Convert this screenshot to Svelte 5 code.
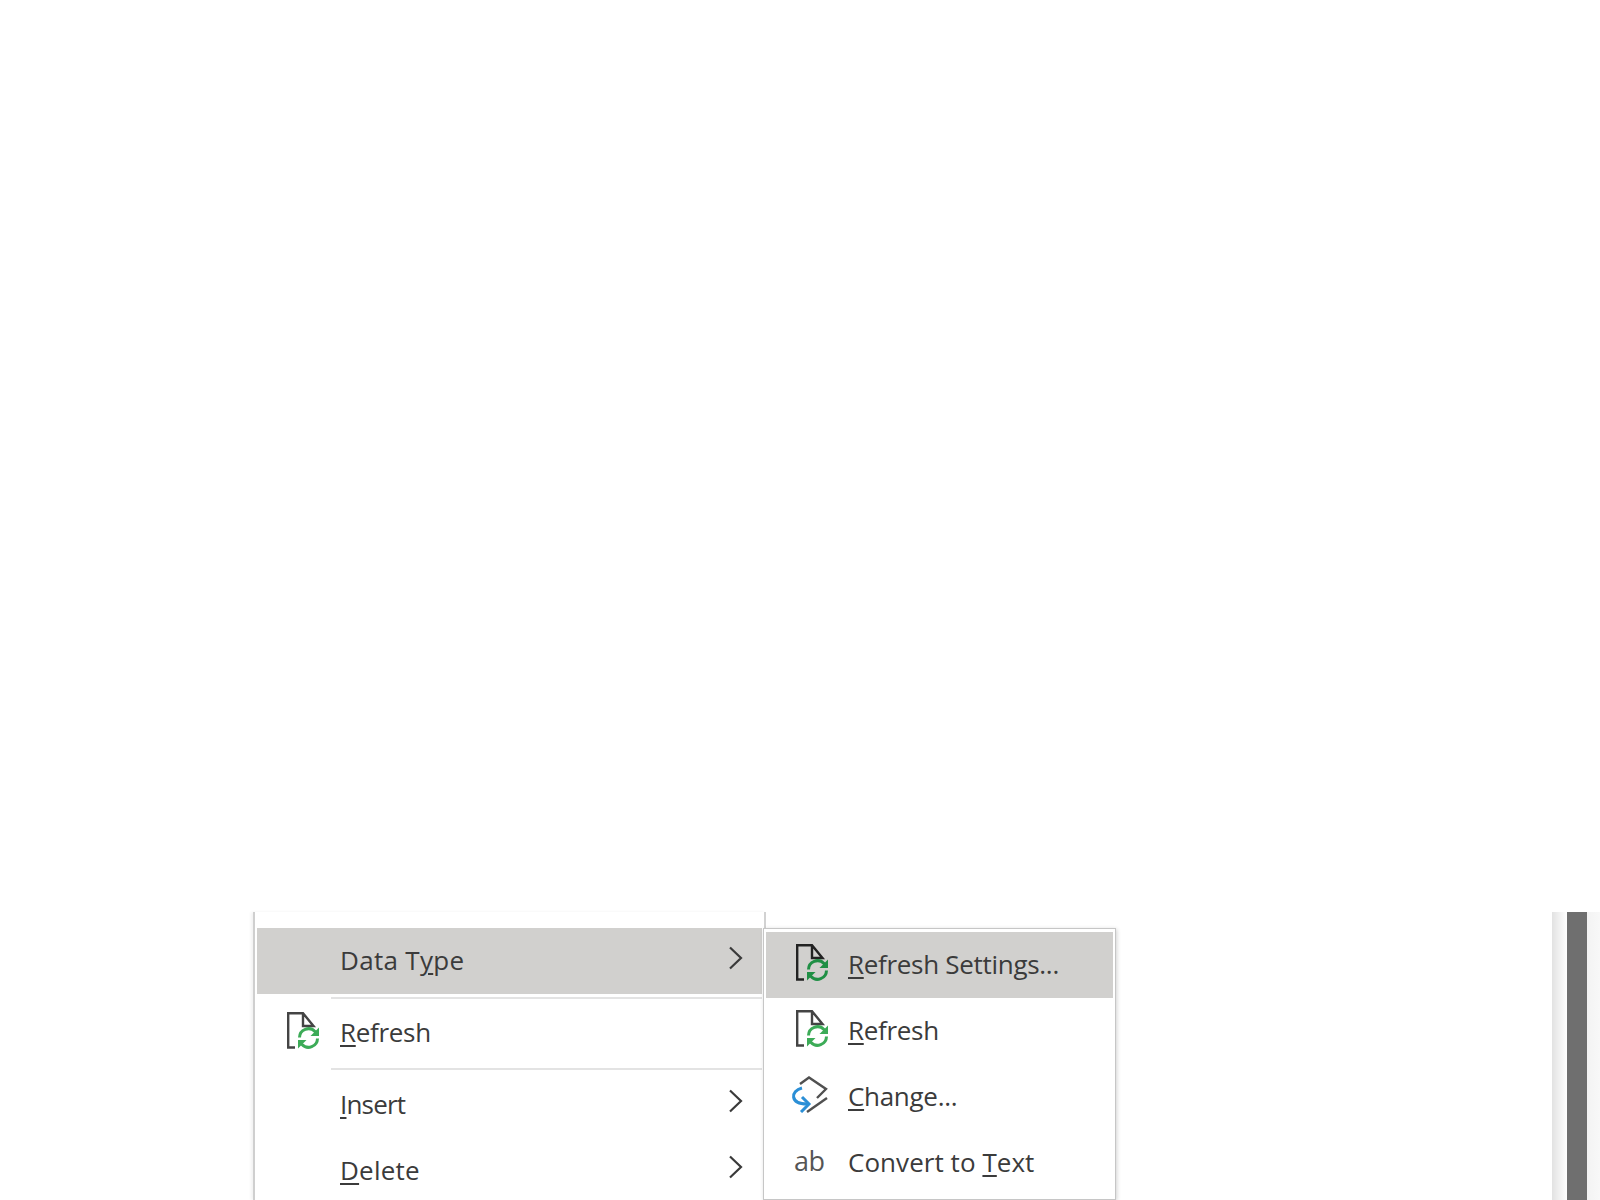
<script>
  const mainRows = [
    { key: 'insert', u: 'I', after: 'nsert' },
    { key: 'delete', u: 'D', after: 'elete' }
  ];
</script>

{#snippet docIcon(green, stroke)}
  <svg class="ico" width="38" height="40" viewBox="0 0 38 40" fill="none">
    <path d="M9 36.500H2.200V2.200H17L27.500 15H17V3" stroke={stroke} stroke-width="2.400" />
    <g transform="translate(-1.500 -1.500)">
      <path d="M15 28a9 9 0 0 1 15.500-6l2 2" stroke={green} stroke-width="3" />
      <path d="M34.500 18v8.500H26" fill={green} />
      <path d="M33 29a9 9 0 0 1-15.500 6l-2-2" stroke={green} stroke-width="3" />
      <path d="M13.500 39v-8.500H22" fill={green} />
    </g>
  </svg>
{/snippet}

{#snippet chevron()}
  <svg class="chev" width="15" height="24" viewBox="0 0 15 24" fill="none">
    <path d="M2 1.500L13 12L2 22.500" stroke="#3a3a3a" stroke-width="2.200" />
  </svg>
{/snippet}

<div class="page">
  <div class="menu">
    <div class="row active">
      <span class="label raised wide">Data T<u>y</u>pe</span>
      {@render chevron()}

      <div class="submenu">
        <div class="subrow active">
          <span class="subicon doc">{@render docIcon('#1f8f45', '#222')}</span>
          <span class="label raised"><u>R</u>efresh Settings...</span>
        </div>
        <div class="subrow">
          <span class="subicon doc">{@render docIcon('#3cab57', '#444')}</span>
          <span class="label raised"><u>R</u>efresh</span>
        </div>
        <div class="subrow">
          <span class="subicon change">
            <svg class="ico" width="37" height="37" viewBox="0 0 37 37" fill="none">
              <path d="M9 8L18 1.500L35 13L26 22" stroke="#505050" stroke-width="2.400" />
              <path d="M16 36L36 22" stroke="#505050" stroke-width="2.400" />
              <path d="M11 12C-1 15-1 28 16 28" stroke="#2b8fd6" stroke-width="3" />
              <path d="M11 21L18 28L10 36" stroke="#2b8fd6" stroke-width="3" />
            </svg>
          </span>
          <span class="label raised"><u>C</u>hange...</span>
        </div>
        <div class="subrow">
          <span class="subicon ab">ab</span>
          <span class="label raised even">Convert to <u>T</u>ext</span>
        </div>
      </div>
    </div>

    <div class="sep"></div>
    <div class="row refresh">
      <span class="mainicon">{@render docIcon('#3cab57', '#444')}</span>
      <span class="label"><u>R</u>efresh</span>
    </div>
    <div class="sep second"></div>

    {#each mainRows as r (r.key)}
      <div class="row">
        <span class="label {r.key}"><u>{r.u}</u>{r.after}</span>
        {@render chevron()}
      </div>
    {/each}
  </div>

  <div class="scrollbar">
    <div class="track"></div>
    <div class="thumb"></div>
    <div class="track right"></div>
  </div>
</div>

<style>
  :global(body) {
    margin: 0;
    background: #fff;
  }

  .page {
    height: 288px;
    padding-top: 912px;
    padding-left: 253px;
    display: flex;
    align-items: flex-start;
    overflow: hidden;
    font-family: "Open Sans", "Noto Sans", sans-serif;
    font-size: 26px;
    color: #3b3b3b;
  }

  .menu {
    box-sizing: border-box;
    width: 513px;
    height: 288px;
    padding: 16px 2px 0 2px;
    border-left: 2px solid #cfcfcf;
    border-right: 2px solid #d2d2d2;
    background: #fff;
    box-shadow: -2px 0 3px #f1f1f1;
    flex: none;
  }

  .row {
    position: relative;
    height: 66px;
    display: flex;
    align-items: center;
    padding-left: 83px;
    padding-right: 19px;
    justify-content: space-between;
  }

  .row.active,
  .subrow.active {
    background: #d1d0ce;
  }

  .label {
    letter-spacing: -0.3px;
    white-space: nowrap;
    line-height: 1;
  }

  .label.raised {
    margin-bottom: 2px;
  }

  .label.wide {
    letter-spacing: 0.3px;
  }

  .label.even {
    letter-spacing: 0.05px;
  }

  .label.insert {
    letter-spacing: -0.8px;
  }

  .label.delete {
    letter-spacing: 0.2px;
  }

  u {
    text-decoration-thickness: 2px;
    text-underline-offset: 3px;
  }

  .chev {
    flex: none;
    margin-bottom: 6px;
  }

  .sep {
    height: 2px;
    margin: 3px 0 0 74px;
    background: #e3e3e3;
  }

  .sep.second {
    margin-top: 0;
    margin-bottom: 1px;
  }

  .row.refresh {
    height: 69px;
    justify-content: flex-start;
    padding-left: 29px;
  }

  .row.refresh .label {
    margin-bottom: 4px;
  }

  .mainicon {
    width: 54px;
    display: flex;
    flex: none;
    margin-bottom: 6px;
  }

  .submenu {
    position: absolute;
    left: 506px;
    top: 0;
    box-sizing: border-box;
    width: 353px;
    height: 272px;
    padding: 3px 2px;
    background: #fff;
    border: 1px solid #c6c6c6;
    box-shadow: 1px 1px 4px rgba(0, 0, 0, 0.18);
    z-index: 2;
  }

  .subrow {
    height: 66px;
    display: flex;
    align-items: center;
    padding-left: 26px;
  }

  .subicon {
    box-sizing: border-box;
    width: 56px;
    flex: none;
    display: flex;
    align-items: center;
  }

  .subicon.doc {
    padding-left: 3px;
    margin-bottom: 4px;
  }

  .subicon.change {
    margin-bottom: 6px;
    margin-left: -1px;
    margin-right: 1px;
  }

  .ab {
    font-size: 27px;
    color: #555;
    letter-spacing: -0.5px;
    line-height: 1;
    padding-left: 2px;
    margin-bottom: 6px;
  }

  .ico {
    display: block;
  }

  .scrollbar {
    margin-left: auto;
    display: flex;
    height: 288px;
    flex: none;
  }

  .track {
    width: 15px;
    background: linear-gradient(90deg, #e2e2e2, #f4f4f4 60%, #fff);
  }

  .track.right {
    width: 13px;
    background: linear-gradient(90deg, #f3f3f3, #f8f8f8);
  }

  .thumb {
    width: 20px;
    background: #6f6f6f;
  }
</style>
